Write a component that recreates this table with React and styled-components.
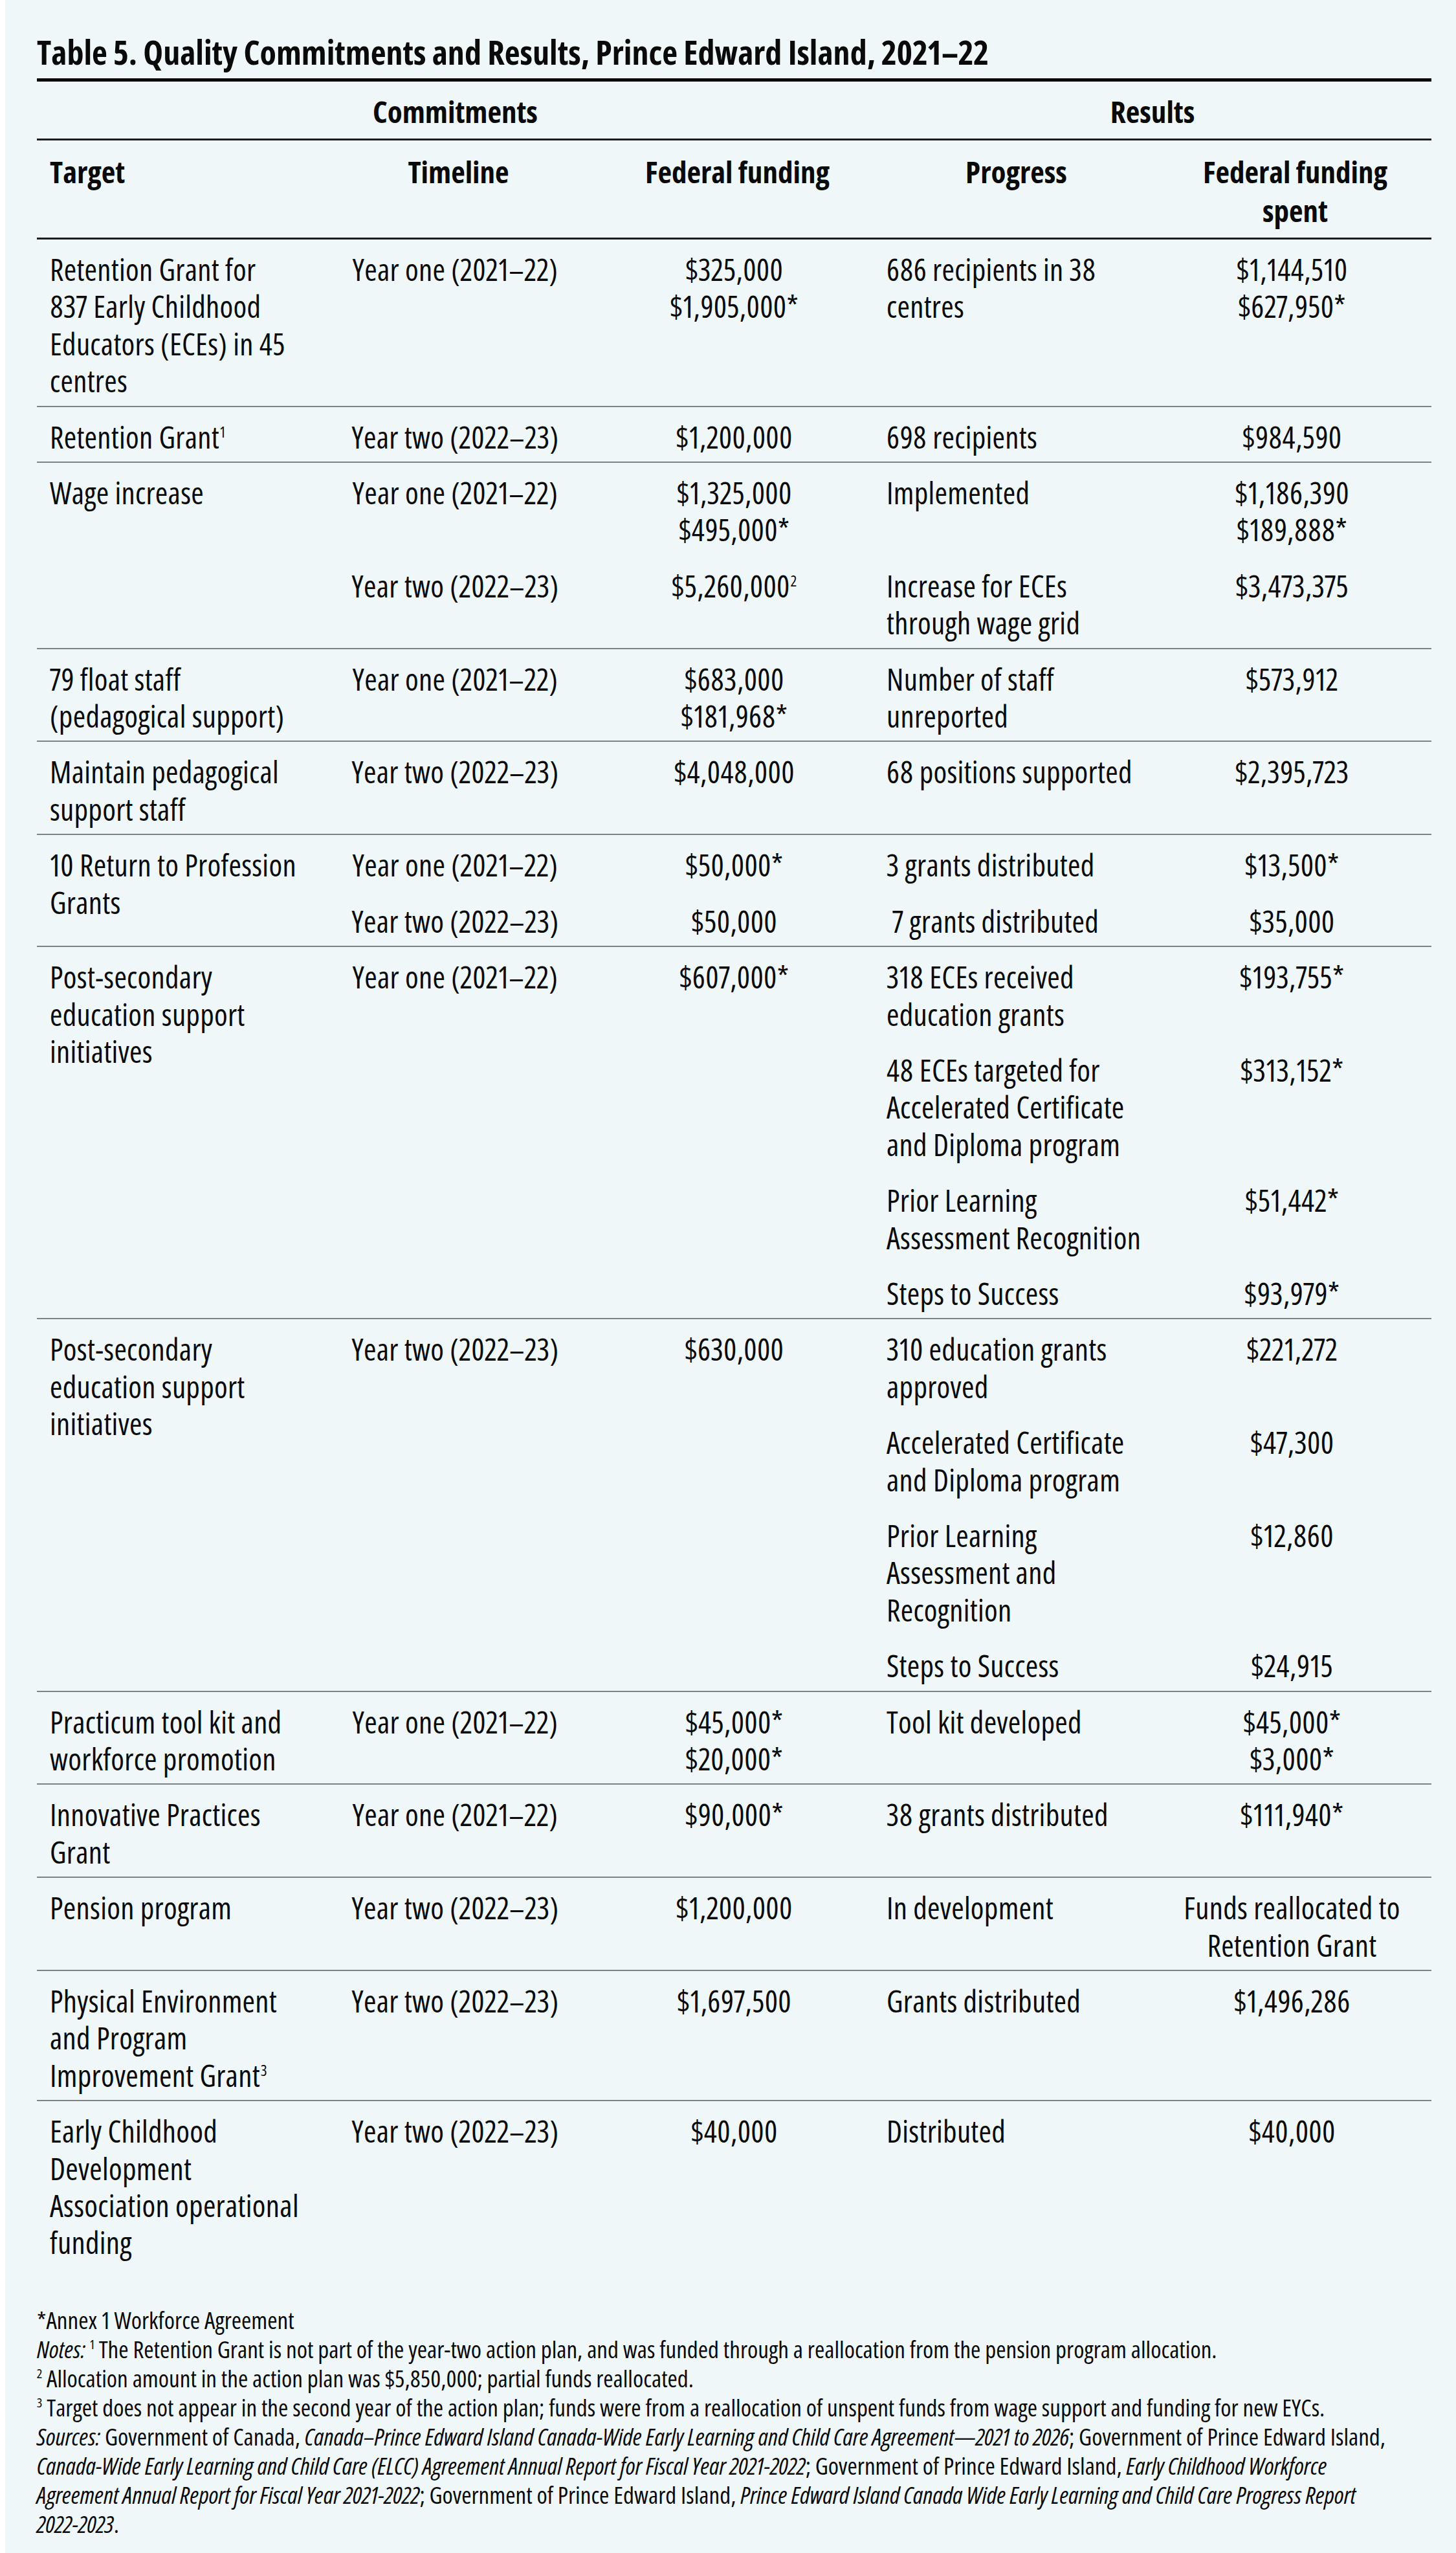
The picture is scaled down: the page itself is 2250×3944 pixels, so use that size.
import React from "react";
import styled, { createGlobalStyle } from "styled-components";

const GlobalStyle = createGlobalStyle`
  * { box-sizing: border-box; }
  body {
    margin: 0;
    background: #ffffff;
    color: #0a0a0a;
    font-family: "Open Sans", "Liberation Sans", sans-serif;
    font-stretch: 75%;
    font-variant-numeric: proportional-nums;
  }
`;

const Page = styled.div`
  margin-left: 8px;
  min-height: 3944px;
  background: #eff7f8;
  padding: 49px 38px 0 49px;
`;

const Title = styled.h1`
  margin: 0 0 10px;
  font-size: 52px;
  line-height: 62px;
  font-weight: 700;
  letter-spacing: 0;
`;

const Table = styled.div`
  width: 2155px;
  border-top: 5px solid #000;
`;

const GroupHead = styled.div`
  display: grid;
  grid-template-columns: 3fr 2fr;
  padding: 16px 0 12px;
  border-bottom: 3px solid #1c1c1c;
`;

const GroupLabel = styled.div`
  text-align: center;
  font-size: 47px;
  line-height: 60px;
  font-weight: 700;
`;

const HeadRow = styled.div`
  display: grid;
  grid-template-columns: repeat(5, 1fr);
  padding: 18px 0 12px;
  border-bottom: 3px solid #1c1c1c;
`;

const HeadCell = styled.div`
  padding: 0 10px 0 20px;
  text-align: ${(p) => (p.$left ? "left" : "center")};
  font-size: 47px;
  line-height: 60px;
  font-weight: 700;
`;

const Row = styled.div`
  display: grid;
  grid-template-columns: repeat(5, 1fr);
  padding: 18px 0 9px;
  border-bottom: ${(p) => (p.$last ? "none" : "2px solid #7c8487")};
`;

const Commitments = styled.div`
  grid-column: span 4;
  display: flex;
  flex-direction: column;
  gap: 29px;
`;

const Commitment = styled.div`
  display: grid;
  grid-template-columns: 1fr 1fr 2fr;
`;

const Results = styled.div`
  display: flex;
  flex-direction: column;
  gap: 29px;
`;

const Result = styled.div`
  display: grid;
  grid-template-columns: 1fr 1fr;
`;

const Cell = styled.div`
  padding: ${(p) => (p.$center ? "0 10px" : "0 6px 0 20px")};
  text-align: ${(p) => (p.$center ? "center" : "left")};
  font-size: 47px;
  line-height: 57.4px;
  letter-spacing: 0.3px;
  white-space: pre-line;
`;

const Sup = styled.sup`
  font-size: 0.5em;
  line-height: 0;
  vertical-align: 0.72em;
  margin-left: 1px;
`;

const Notes = styled.div`
  margin-top: 58px;
  font-size: 37px;
  line-height: 45px;
  padding-bottom: 30px;
`;

const NoteLine = styled.div`
  white-space: nowrap;
`;

const Sources = styled.div`
  white-space: nowrap;
`;

const Em = styled.i`
  font-style: italic;
`;

const NoteSup = styled.sup`
  font-size: 0.55em;
  line-height: 0;
  vertical-align: 0.7em;
`;

const rows = [
  {
    target: "Retention Grant for\n837 Early Childhood\nEducators (ECEs) in 45\ncentres",
    items: [
      {
        timeline: "Year one (2021–22)",
        funding: "$325,000\n$1,905,000*",
        results: [{ progress: "686 recipients in 38\ncentres", spent: "$1,144,510\n$627,950*" }],
      },
    ],
  },
  {
    target: (
      <>
        Retention Grant<Sup>1</Sup>
      </>
    ),
    items: [
      {
        timeline: "Year two (2022–23)",
        funding: "$1,200,000",
        results: [{ progress: "698 recipients", spent: "$984,590" }],
      },
    ],
  },
  {
    target: "Wage increase",
    items: [
      {
        timeline: "Year one (2021–22)",
        funding: "$1,325,000\n$495,000*",
        results: [{ progress: "Implemented", spent: "$1,186,390\n$189,888*" }],
      },
      {
        timeline: "Year two (2022–23)",
        funding: (
          <>
            $5,260,000<Sup>2</Sup>
          </>
        ),
        results: [{ progress: "Increase for ECEs\nthrough wage grid", spent: "$3,473,375" }],
      },
    ],
  },
  {
    target: "79 float staff\n(pedagogical support)",
    items: [
      {
        timeline: "Year one (2021–22)",
        funding: "$683,000\n$181,968*",
        results: [{ progress: "Number of staff\nunreported", spent: "$573,912" }],
      },
    ],
  },
  {
    target: "Maintain pedagogical\nsupport staff",
    items: [
      {
        timeline: "Year two (2022–23)",
        funding: "$4,048,000",
        results: [{ progress: "68 positions supported", spent: "$2,395,723" }],
      },
    ],
  },
  {
    target: "10 Return to Profession\nGrants",
    items: [
      {
        timeline: "Year one (2021–22)",
        funding: "$50,000*",
        results: [{ progress: "3 grants distributed", spent: "$13,500*" }],
      },
      {
        timeline: "Year two (2022–23)",
        funding: "$50,000",
        results: [{ progress: "\u00a07 grants distributed", spent: "$35,000" }],
      },
    ],
  },
  {
    target: "Post-secondary\neducation support\ninitiatives",
    items: [
      {
        timeline: "Year one (2021–22)",
        funding: "$607,000*",
        results: [
          { progress: "318 ECEs received\neducation grants", spent: "$193,755*" },
          { progress: "48 ECEs targeted for\nAccelerated Certificate\nand Diploma program", spent: "$313,152*" },
          { progress: "Prior Learning\nAssessment Recognition", spent: "$51,442*" },
          { progress: "Steps to Success", spent: "$93,979*" },
        ],
      },
    ],
  },
  {
    target: "Post-secondary\neducation support\ninitiatives",
    items: [
      {
        timeline: "Year two (2022–23)",
        funding: "$630,000",
        results: [
          { progress: "310 education grants\napproved", spent: "$221,272" },
          { progress: "Accelerated Certificate\nand Diploma program", spent: "$47,300" },
          { progress: "Prior Learning\nAssessment and\nRecognition", spent: "$12,860" },
          { progress: "Steps to Success", spent: "$24,915" },
        ],
      },
    ],
  },
  {
    target: "Practicum tool kit and\nworkforce promotion",
    items: [
      {
        timeline: "Year one (2021–22)",
        funding: "$45,000*\n$20,000*",
        results: [{ progress: "Tool kit developed", spent: "$45,000*\n$3,000*" }],
      },
    ],
  },
  {
    target: "Innovative Practices\nGrant",
    items: [
      {
        timeline: "Year one (2021–22)",
        funding: "$90,000*",
        results: [{ progress: "38 grants distributed", spent: "$111,940*" }],
      },
    ],
  },
  {
    target: "Pension program",
    items: [
      {
        timeline: "Year two (2022–23)",
        funding: "$1,200,000",
        results: [{ progress: "In development", spent: "Funds reallocated to\nRetention Grant" }],
      },
    ],
  },
  {
    target: (
      <>
        {"Physical Environment\nand Program\nImprovement Grant"}
        <Sup>3</Sup>
      </>
    ),
    items: [
      {
        timeline: "Year two (2022–23)",
        funding: "$1,697,500",
        results: [{ progress: "Grants distributed", spent: "$1,496,286" }],
      },
    ],
  },
  {
    target: "Early Childhood\nDevelopment\nAssociation operational\nfunding",
    items: [
      {
        timeline: "Year two (2022–23)",
        funding: "$40,000",
        results: [{ progress: "Distributed", spent: "$40,000" }],
      },
    ],
  },
];

export default function App() {
  return (
    <Page>
      <GlobalStyle />
      <Title>Table 5. Quality Commitments and Results, Prince Edward Island, 2021–22</Title>
      <Table>
        <GroupHead>
          <GroupLabel>Commitments</GroupLabel>
          <GroupLabel>Results</GroupLabel>
        </GroupHead>
        <HeadRow>
          <HeadCell $left>Target</HeadCell>
          <HeadCell>Timeline</HeadCell>
          <HeadCell>Federal funding</HeadCell>
          <HeadCell>Progress</HeadCell>
          <HeadCell>
            Federal funding
            <br />
            spent
          </HeadCell>
        </HeadRow>
        {rows.map((row, i) => (
          <Row key={i} $last={i === rows.length - 1}>
            <Cell>{row.target}</Cell>
            <Commitments>
              {row.items.map((item, j) => (
                <Commitment key={j}>
                  <Cell $center>{item.timeline}</Cell>
                  <Cell $center>{item.funding}</Cell>
                  <Results>
                    {item.results.map((r, k) => (
                      <Result key={k}>
                        <Cell>{r.progress}</Cell>
                        <Cell $center>{r.spent}</Cell>
                      </Result>
                    ))}
                  </Results>
                </Commitment>
              ))}
            </Commitments>
          </Row>
        ))}
      </Table>
      <Notes>
        <NoteLine>*Annex 1 Workforce Agreement</NoteLine>
        <NoteLine>
          <Em>Notes:</Em> <NoteSup>1</NoteSup> The Retention Grant is not part of the year-two action plan, and was
          funded through a reallocation from the pension program allocation.
        </NoteLine>
        <NoteLine>
          <NoteSup>2</NoteSup> Allocation amount in the action plan was $5,850,000; partial funds reallocated.
        </NoteLine>
        <NoteLine>
          <NoteSup>3</NoteSup> Target does not appear in the second year of the action plan; funds were from a
          reallocation of unspent funds from wage support and funding for new EYCs.
        </NoteLine>
        <Sources>
          <Em>Sources:</Em> Government of Canada,{" "}
          <Em>Canada–Prince Edward Island Canada-Wide Early Learning and Child Care Agreement—2021 to 2026</Em>;
          Government of Prince Edward Island,
          <br />
          <Em>Canada-Wide Early Learning and Child Care (ELCC) Agreement Annual Report for Fiscal Year 2021-2022</Em>;
          Government of Prince Edward Island, <Em>Early Childhood Workforce</Em>
          <br />
          <Em>Agreement Annual Report for Fiscal Year 2021-2022</Em>; Government of Prince Edward Island,{" "}
          <Em>Prince Edward Island Canada Wide Early Learning and Child Care Progress Report</Em>
          <br />
          <Em>2022-2023</Em>.
        </Sources>
      </Notes>
    </Page>
  );
}
